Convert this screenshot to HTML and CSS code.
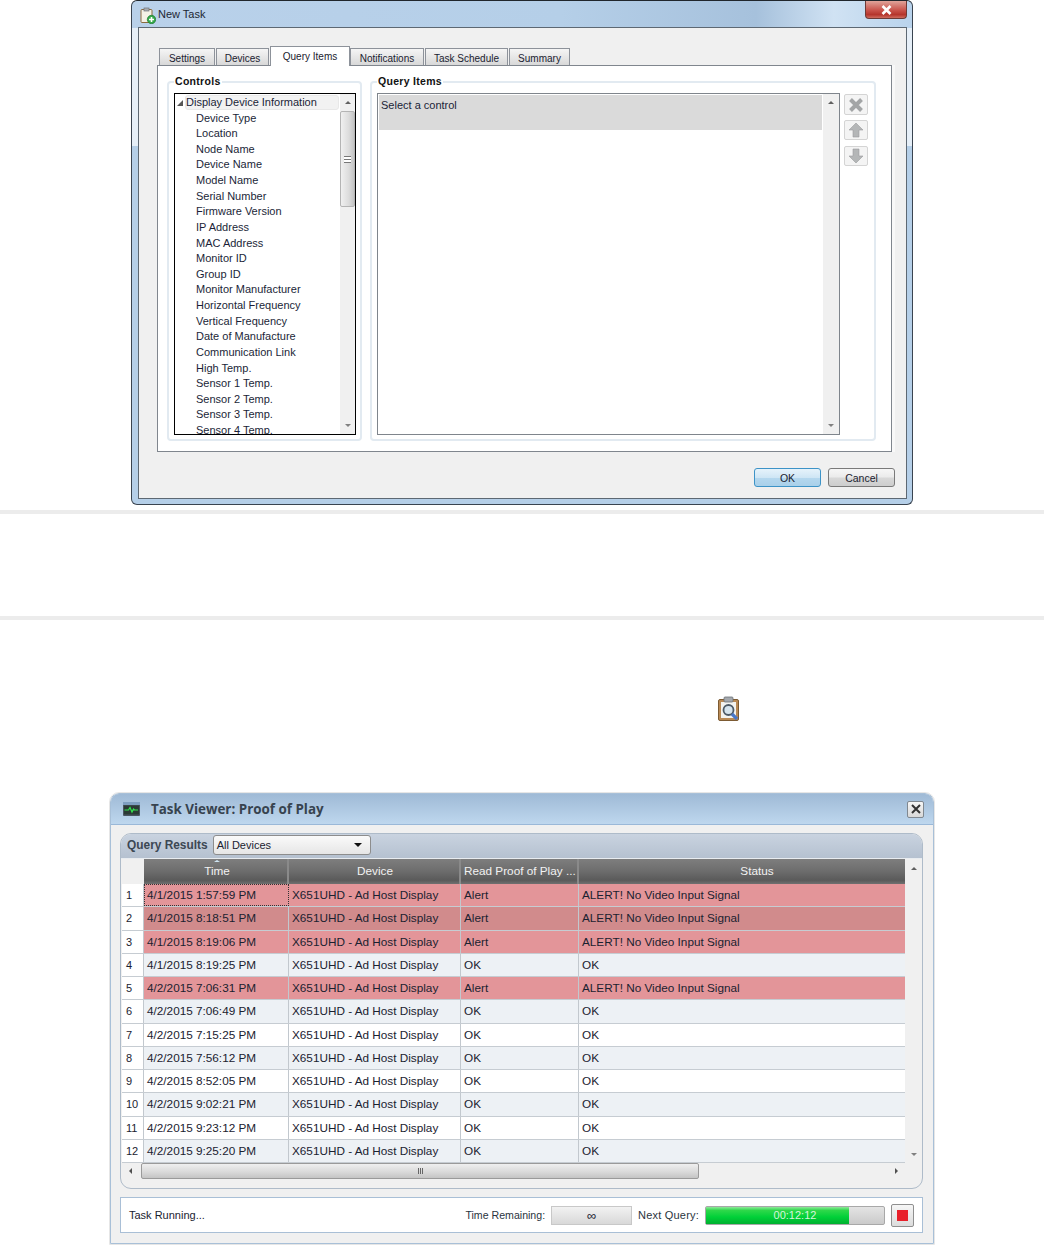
FILE: index.html
```html
<!DOCTYPE html>
<html lang="en">

<head>
    <meta charset="UTF-8">
    <title>New Task and Task Viewer</title>
    <link rel="stylesheet" href="styles.css">
</head>

<body>
    <div class="new-task">
        <div class="title-bar">
            <svg class="title-icon" width="16" height="17" viewBox="0 0 16 17">
                <rect x="1" y="2.5" width="11" height="13" rx="1" fill="#f4f1e6" stroke="#8b6b3e"/>
                <rect x="4" y="1" width="5" height="3" fill="#a9adb2" stroke="#6f7378" stroke-width=".7"/>
                <circle cx="11.5" cy="12.5" r="4.2" fill="#35a84a" stroke="#1d7a30" stroke-width=".7"/>
                <path d="M9 12.5h5M11.5 10v5" stroke="#fff" stroke-width="1.6"/>
            </svg>
            <span class="title-text">New Task</span>
            <div class="close-red">
                <svg width="11" height="10" viewBox="0 0 11 10"><path d="M1.5 1l8 8M9.5 1l-8 8" stroke="#fff" stroke-width="2.6"/></svg>
            </div>
        </div>
        <div class="inner">
            <div class="tabs">
                <div class="tab tab-settings">Settings</div>
                <div class="tab tab-devices">Devices</div>
                <div class="tab tab-active">Query Items</div>
                <div class="tab tab-notify">Notifications</div>
                <div class="tab tab-schedule">Task Schedule</div>
                <div class="tab tab-summary">Summary</div>
            </div>
            <div class="panel">
                <div class="group group-controls">
                    <div class="group-title"><span>Controls</span></div>
                    <div class="listbox listbox-black">
                        <div class="tree">
                            <div class="tree-head"><span class="tree-arrow"></span><span class="tree-label">Display Device Information</span></div>
                            <div class="tree-item">Device Type</div>
                            <div class="tree-item">Location</div>
                            <div class="tree-item">Node Name</div>
                            <div class="tree-item">Device Name</div>
                            <div class="tree-item">Model Name</div>
                            <div class="tree-item">Serial Number</div>
                            <div class="tree-item">Firmware Version</div>
                            <div class="tree-item">IP Address</div>
                            <div class="tree-item">MAC Address</div>
                            <div class="tree-item">Monitor ID</div>
                            <div class="tree-item">Group ID</div>
                            <div class="tree-item">Monitor Manufacturer</div>
                            <div class="tree-item">Horizontal Frequency</div>
                            <div class="tree-item">Vertical Frequency</div>
                            <div class="tree-item">Date of Manufacture</div>
                            <div class="tree-item">Communication Link</div>
                            <div class="tree-item">High Temp.</div>
                            <div class="tree-item">Sensor 1 Temp.</div>
                            <div class="tree-item">Sensor 2 Temp.</div>
                            <div class="tree-item">Sensor 3 Temp.</div>
                            <div class="tree-item">Sensor 4 Temp.</div>
                        </div>
                        <div class="vscroll">
                            <div class="arrow-box"><span class="arr-up"></span></div>
                            <div class="thumb"><span class="grip"></span></div>
                            <div class="track"></div>
                            <div class="arrow-box"><span class="arr-down"></span></div>
                        </div>
                    </div>
                </div>
                <div class="group group-query">
                    <div class="group-title"><span>Query Items</span></div>
                    <div class="query-body">
                        <div class="listbox listbox-grey">
                            <div class="query-list">
                                <div class="query-selected">Select a control</div>
                            </div>
                            <div class="vscroll">
                                <div class="arrow-box"><span class="arr-up"></span></div>
                                <div class="track"></div>
                                <div class="arrow-box"><span class="arr-down"></span></div>
                            </div>
                        </div>
                        <div class="tools">
                            <div class="tool tool-tall">
                                <svg width="16" height="16" viewBox="0 0 16 16"><path d="M2.5 2.5l11 11M13.5 2.5l-11 11" stroke="#a3a5a6" stroke-width="4"/></svg>
                            </div>
                            <div class="tool">
                                <svg width="16" height="16" viewBox="0 0 16 16"><path d="M8 1l7 7h-4v7H5V8H1z" fill="#b4b6b7" stroke="#9a9c9d" stroke-width=".6"/></svg>
                            </div>
                            <div class="tool">
                                <svg width="16" height="16" viewBox="0 0 16 16"><path d="M8 15l7-7h-4V1H5v7H1z" fill="#b4b6b7" stroke="#9a9c9d" stroke-width=".6"/></svg>
                            </div>
                        </div>
                    </div>
                </div>
            </div>
            <div class="dialog-buttons">
                <div class="btn btn-default">OK</div>
                <div class="btn">Cancel</div>
            </div>
        </div>
    </div>

    <div class="sep sep-one"></div>
    <div class="sep sep-two"></div>

    <div class="icon-row">
        <svg width="25" height="26" viewBox="0 0 25 26">
            <rect x="1.5" y="3.5" width="20" height="21" rx="1.5" fill="#b98a55" stroke="#7c5a32"/>
            <rect x="4" y="6" width="15" height="16" fill="#f3f3f0"/>
            <rect x="7" y="1" width="9" height="5" rx="1" fill="#a4a8ad" stroke="#6d7176" stroke-width=".8"/>
            <circle cx="11.5" cy="14" r="5" fill="#d5e4ee" stroke="#4d5a66" stroke-width="1.8"/>
            <path d="M15 18l5 5" stroke="#4a78c8" stroke-width="3.2"/>
        </svg>
    </div>

    <div class="viewer">
        <div class="viewer-title">
            <svg width="17" height="14" viewBox="0 0 17 14">
                <rect width="17" height="14" rx="1" fill="#4a5560"/>
                <rect y="0" width="17" height="3" fill="#7f9fc0"/>
                <rect x="1" y="3.5" width="15" height="9" fill="#2b3a34"/>
                <path d="M1.5 8h4l1.5-2.5 2 4.5 1.5-3 1 1h3.5" fill="none" stroke="#35e04f" stroke-width="1.2"/>
            </svg>
            <span class="viewer-name">Task Viewer: Proof of Play</span>
            <div class="close-small">
                <svg width="10" height="10" viewBox="0 0 10 10"><path d="M1 1l8 8M9 1l-8 8" stroke="#333" stroke-width="2"/></svg>
            </div>
        </div>
        <div class="viewer-body">
            <div class="results">
                <div class="results-head">
                    <span class="results-label">Query Results</span>
                    <div class="combo"><span>All Devices</span><span class="combo-arrow"></span></div>
                </div>
                <div class="grid-area">
                    <div class="grid">
                        <div class="row row-header">
                            <div class="c c-num"></div>
                            <div class="c c-time"><span class="sort-mark"></span>Time</div>
                            <div class="c c-device">Device</div>
                            <div class="c c-read">Read Proof of Play ...</div>
                            <div class="c c-status">Status</div>
                        </div>
                        <div class="row alert">
                            <div class="c c-num">1</div><div class="c c-time focus">4/1/2015 1:57:59 PM</div><div class="c c-device">X651UHD - Ad Host Display</div><div class="c c-read">Alert</div><div class="c c-status">ALERT! No Video Input Signal</div>
                        </div>
                        <div class="row alert-dark">
                            <div class="c c-num">2</div><div class="c c-time">4/1/2015 8:18:51 PM</div><div class="c c-device">X651UHD - Ad Host Display</div><div class="c c-read">Alert</div><div class="c c-status">ALERT! No Video Input Signal</div>
                        </div>
                        <div class="row alert">
                            <div class="c c-num">3</div><div class="c c-time">4/1/2015 8:19:06 PM</div><div class="c c-device">X651UHD - Ad Host Display</div><div class="c c-read">Alert</div><div class="c c-status">ALERT! No Video Input Signal</div>
                        </div>
                        <div class="row shade">
                            <div class="c c-num">4</div><div class="c c-time">4/1/2015 8:19:25 PM</div><div class="c c-device">X651UHD - Ad Host Display</div><div class="c c-read">OK</div><div class="c c-status">OK</div>
                        </div>
                        <div class="row alert">
                            <div class="c c-num">5</div><div class="c c-time">4/2/2015 7:06:31 PM</div><div class="c c-device">X651UHD - Ad Host Display</div><div class="c c-read">Alert</div><div class="c c-status">ALERT! No Video Input Signal</div>
                        </div>
                        <div class="row shade">
                            <div class="c c-num">6</div><div class="c c-time">4/2/2015 7:06:49 PM</div><div class="c c-device">X651UHD - Ad Host Display</div><div class="c c-read">OK</div><div class="c c-status">OK</div>
                        </div>
                        <div class="row">
                            <div class="c c-num">7</div><div class="c c-time">4/2/2015 7:15:25 PM</div><div class="c c-device">X651UHD - Ad Host Display</div><div class="c c-read">OK</div><div class="c c-status">OK</div>
                        </div>
                        <div class="row shade">
                            <div class="c c-num">8</div><div class="c c-time">4/2/2015 7:56:12 PM</div><div class="c c-device">X651UHD - Ad Host Display</div><div class="c c-read">OK</div><div class="c c-status">OK</div>
                        </div>
                        <div class="row">
                            <div class="c c-num">9</div><div class="c c-time">4/2/2015 8:52:05 PM</div><div class="c c-device">X651UHD - Ad Host Display</div><div class="c c-read">OK</div><div class="c c-status">OK</div>
                        </div>
                        <div class="row shade">
                            <div class="c c-num">10</div><div class="c c-time">4/2/2015 9:02:21 PM</div><div class="c c-device">X651UHD - Ad Host Display</div><div class="c c-read">OK</div><div class="c c-status">OK</div>
                        </div>
                        <div class="row">
                            <div class="c c-num">11</div><div class="c c-time">4/2/2015 9:23:12 PM</div><div class="c c-device">X651UHD - Ad Host Display</div><div class="c c-read">OK</div><div class="c c-status">OK</div>
                        </div>
                        <div class="row shade">
                            <div class="c c-num">12</div><div class="c c-time">4/2/2015 9:25:20 PM</div><div class="c c-device">X651UHD - Ad Host Display</div><div class="c c-read">OK</div><div class="c c-status">OK</div>
                        </div>
                    </div>
                    <div class="vscroll grid-scroll">
                        <div class="arrow-box arrow-tall"><span class="arr-up"></span></div>
                        <div class="track"></div>
                        <div class="arrow-box arrow-tall"><span class="arr-down"></span></div>
                    </div>
                </div>
                <div class="hscroll">
                    <div class="arrow-side"><span class="arr-left"></span></div>
                    <div class="hthumb"><span class="hgrip"></span></div>
                    <div class="htrack"></div>
                    <div class="arrow-side"><span class="arr-right"></span></div>
                </div>
            </div>
            <div class="status-bar">
                <span class="status-text">Task Running...</span>
                <span class="status-label time-label">Time Remaining:</span>
                <div class="remaining">&infin;</div>
                <span class="status-label next-label">Next Query:</span>
                <div class="progress">
                    <div class="progress-fill"></div>
                    <span class="progress-text">00:12:12</span>
                </div>
                <div class="stop"><span class="stop-square"></span></div>
            </div>
        </div>
    </div>
</body>

</html>
```

FILE: styles.css
```css
html, body {
    margin: 0;
    height: 1245px;
    overflow: hidden;
    background: #fff;
}
body {
    font-family: "Liberation Sans", Arial, sans-serif;
    font-size: 11px;
    color: #1a2230;
}

/* new task dialog */
.new-task {
    box-sizing: border-box;
    width: 782px;
    height: 505px;
    margin-left: 131px;
    padding: 0 5px 6px 6px;
    border: 1px solid #3a4450;
    border-top-color: #20262c;
    border-radius: 6px;
    background:
        linear-gradient(90deg, #b9d1ea 0%, #b5cfe8 55%, #a6c1dc 80%, #d0e2f3 90%, #b9d3ec 100%) top / 100% 27px no-repeat,
        linear-gradient(#e6eff8 145px, #b5cfe8 145px);
}
.title-bar {
    display: flex;
    align-items: flex-start;
    height: 26px;
}
.title-icon {
    margin: 6px 0 0 2px;
}
.title-text {
    margin: 7px 0 0 2px;
    font-size: 11px;
    color: #1c2733;
}
.close-red {
    display: flex;
    justify-content: center;
    align-items: center;
    width: 42px;
    height: 18px;
    margin-left: auto;
    border: 1px solid #6d3a36;
    border-top: 0;
    box-sizing: border-box;
    border-radius: 0 0 4px 4px;
    background: linear-gradient(#e0a49a, #c9524a 55%, #b5352c 80%, #cf6b5e);
}
.inner {
    box-sizing: border-box;
    height: 472px;
    padding: 18px 14px 0 18px;
    border: 1px solid #5d6873;
    background: #f0f0f0;
}
.tabs {
    display: flex;
    align-items: flex-end;
    height: 19px;
    padding-left: 2px;
}
.tab {
    box-sizing: border-box;
    height: 17px;
    margin-right: 1px;
    border: 1px solid #8d929a;
    border-bottom: 0;
    background: linear-gradient(#f5f5f5, #e4e4e4 60%, #d8d8d8);
    text-align: center;
    line-height: 19px;
    font-size: 10px;
}
.tab-settings { width: 56px; }
.tab-devices { width: 53px; }
.tab-active {
    position: relative;
    z-index: 1;
    width: 80px;
    height: 20px;
    margin-bottom: -1px;
    margin-right: 0;
    background: #fff;
    line-height: 20px;
}
.tab-notify { width: 74px; }
.tab-schedule { width: 83px; }
.tab-summary { width: 61px; margin-right: 0; }

.panel {
    box-sizing: border-box;
    display: flex;
    gap: 8px;
    width: 735px;
    height: 387px;
    padding: 15px 0 0 9px;
    border: 1px solid #80868e;
    background: #fff;
    box-shadow: 3px 0 0 #f8f8f8;
}
.group {
    box-sizing: border-box;
    height: 360px;
    padding: 0 5px;
    border: 2px solid #e2eaf1;
    border-radius: 4px;
}
.group-controls { width: 195px; }
.group-query { width: 506px; }
.group-title {
    height: 11px;
    margin-top: -7px;
    line-height: 11px;
    font-weight: bold;
    font-size: 10.5px;
    letter-spacing: .3px;
    color: #111;
}
.group-title span {
    padding: 0 1px;
    background: #fff;
}
.listbox {
    box-sizing: border-box;
    display: flex;
    height: 342px;
    margin-top: 6px;
    overflow: hidden;
    background: #fff;
}
.listbox-black {
    width: 182px;
    border: 1px solid #000;
}
.listbox-grey {
    width: 463px;
    border: 1px solid #7f858c;
}
.tree {
    flex: 1;
    overflow: hidden;
    font-size: 11px;
    color: #1b1f38;
}
.tree-head {
    display: flex;
    align-items: center;
    height: 15.5px;
    margin-top: 1px;
}
.tree-arrow {
    width: 0;
    height: 0;
    margin: 0 3px 0 2px;
    border-left: 6px solid transparent;
    border-bottom: 6px solid #555;
}
.tree-label {
    box-sizing: border-box;
    width: 154px;
    height: 15px;
    margin-left: -1px;
    border: 1px solid #e8e8e8;
    border-radius: 3px;
    background: #f2f2f2;
    line-height: 13px;
}
.tree-item {
    height: 15.63px;
    padding-left: 21px;
    line-height: 15.63px;
    white-space: nowrap;
}
.vscroll {
    display: flex;
    flex-direction: column;
    width: 15px;
    background: #f0f0f0;
    flex-shrink: 0;
}
.arrow-box {
    display: flex;
    justify-content: center;
    align-items: center;
    height: 17px;
    flex-shrink: 0;
}
.arr-up, .arr-down, .arr-left, .arr-right {
    width: 0;
    height: 0;
}
.arr-up {
    border-left: 3px solid transparent;
    border-right: 3px solid transparent;
    border-bottom: 3px solid #606060;
}
.arr-down {
    border-left: 3px solid transparent;
    border-right: 3px solid transparent;
    border-top: 3px solid #808080;
}
.arr-left {
    border-top: 3px solid transparent;
    border-bottom: 3px solid transparent;
    border-right: 3px solid #505050;
}
.arr-right {
    border-top: 3px solid transparent;
    border-bottom: 3px solid transparent;
    border-left: 3px solid #505050;
}
.thumb {
    box-sizing: border-box;
    display: flex;
    justify-content: center;
    align-items: center;
    height: 96px;
    border: 1px solid #b4b4b4;
    border-radius: 2px;
    background: linear-gradient(90deg, #f0f0f0, #dcdcdc 60%, #c4c4c4);
    flex-shrink: 0;
}
.grip {
    width: 7px;
    height: 5px;
    border-top: 1px solid #777;
    border-bottom: 1px solid #777;
    background: linear-gradient(#fff 40%, #777 40%, #777 60%, #fff 60%);
}
.track {
    flex: 1;
}
.query-body {
    display: flex;
    gap: 4px;
}
.query-list {
    flex: 1;
    padding: 1px 1px 0;
}
.query-selected {
    height: 35px;
    padding: 4px 0 0 2px;
    box-sizing: border-box;
    background: #dadada;
    font-size: 11px;
    color: #1b1f38;
}
.listbox-grey .vscroll {
    width: 16px;
}
.tools {
    display: flex;
    flex-direction: column;
    gap: 5px;
    margin-top: 7px;
}
.tool {
    box-sizing: border-box;
    display: flex;
    justify-content: center;
    align-items: center;
    width: 24px;
    height: 21px;
    border: 1px solid #d4d4d4;
    border-radius: 2px;
    background: #f4f4f4;
}
.tool + .tool {
    height: 20px;
}
.tool:last-child {
    margin-top: 1px;
}
.dialog-buttons {
    display: flex;
    justify-content: flex-end;
    gap: 7px;
    padding: 16px 11px 0 0;
    margin-right: -14px;
}
.btn {
    box-sizing: border-box;
    width: 67px;
    height: 19px;
    border: 1px solid #7a7a7a;
    border-radius: 3px;
    background: linear-gradient(#f6f6f6, #ebebeb 48%, #d8d8d8 52%, #cdcdcd);
    text-align: center;
    line-height: 18px;
    font-size: 10.5px;
}
.btn-default {
    border-color: #3d93c7;
    background: linear-gradient(#e6f3fb, #cfe6f5 50%, #b4d7ee 55%, #a9d0ea);
}

/* separators */
.sep {
    height: 4px;
    background: #ececec;
}
.sep-one { margin-top: 5px; }
.sep-two { margin-top: 102px; }

.icon-row {
    height: 26px;
    margin-top: 76px;
    padding-left: 717px;
}

/* task viewer */
.viewer {
    box-sizing: border-box;
    width: 824px;
    height: 451px;
    margin: 71px 0 0 110px;
    border: 1px solid #a8c0d8;
    outline: 1px solid #e6e6e6;
    border-radius: 9px 9px 0 0;
    background: #f0f0f0;
}
.viewer-title {
    display: flex;
    align-items: center;
    height: 30px;
    padding: 0 9px 0 12px;
    border-bottom: 1px solid #9ab8d8;
    border-radius: 8px 8px 0 0;
    background: linear-gradient(#9fbad6, #bed7ee);
}
.viewer-name {
    margin-left: 11px;
    font-family: "Open Sans", sans-serif;
    font-size: 13.4px;
    font-weight: bold;
    color: #37434f;
}
.close-small {
    box-sizing: border-box;
    display: flex;
    justify-content: center;
    align-items: center;
    width: 17px;
    height: 17px;
    margin-left: auto;
    border: 1px solid #808890;
    border-radius: 2px;
    background: linear-gradient(#f6f6f6, #d8d8d8);
}
.viewer-body {
    padding: 8px 10px 0 9px;
}
.results {
    box-sizing: border-box;
    height: 356px;
    border: 1px solid #aebbc9;
    border-radius: 11px;
    background: #f0f0f0;
    overflow: hidden;
}
.results-head {
    display: flex;
    align-items: flex-start;
    height: 24px;
    padding-left: 6px;
    background: linear-gradient(#c9d3e0, #b5c1d0);
    border-bottom: 1px solid #e8ecf0;
}
.results-label {
    margin-top: 4px;
    font-size: 11.9px;
    font-weight: bold;
    color: #3c4753;
}
.combo {
    box-sizing: border-box;
    display: flex;
    justify-content: space-between;
    align-items: center;
    width: 158px;
    height: 20px;
    margin: 1px 0 0 5px;
    padding: 0 8px 0 3px;
    border: 1px solid #8d8d8d;
    border-radius: 3px;
    background: linear-gradient(#fafafa, #e6e6e6);
    font-size: 11px;
}
.combo-arrow {
    width: 0;
    height: 0;
    border-left: 4px solid transparent;
    border-right: 4px solid transparent;
    border-top: 4px solid #111;
}
.grid-area {
    display: flex;
    padding-left: 1px;
    width: 800px;
}
.grid {
    width: 783px;
    height: 304px;
    overflow: hidden;
}
.grid-scroll {
    width: 16px;
}
.arrow-tall {
    height: 18px;
    padding-left: 2px;
}
.arrow-tall:last-child {
    padding-top: 2px;
}
.row {
    box-sizing: border-box;
    display: flex;
    height: 23.25px;
    border-bottom: 1px solid #c6ccd2;
    background: #fff;
    line-height: 22px;
    font-size: 11.75px;
    white-space: nowrap;
}
.row-header {
    height: 25px;
    border-bottom: 0;
    background: none;
    color: #f2f2f2;
    line-height: 23px;
    text-align: center;
}
.row-header .c {
    padding: 0;
    border-right: 2px solid #8a8a8a;
    background: linear-gradient(#7e7e7e, #6c6c6c 50%, #5a5a5a 85%, #707070);
}
.row-header .c-time {
    padding-left: 3px;
}
.row-header .c-device {
    padding-left: 2px;
}
.row-header .c-read {
    padding-left: 3px;
    text-align: left;
}
.row-header .c-status {
    padding-left: 30px;
    border-right: 0;
}
.row-header .c-num {
    border-right: 0;
    background: #f0f0f0;
}
.c {
    box-sizing: border-box;
    flex-shrink: 0;
    padding-left: 3px;
    border-right: 1px solid #c2c8ce;
    overflow: hidden;
}
.c-num { width: 22px; padding-left: 4px; background: #fff; font-size: 11px; }
.c-time { width: 145px; position: relative; }
.c-device { width: 172px; }
.c-read { width: 118px; }
.c-status { width: 326px; border-right: 0; }
.shade .c-time, .shade .c-device, .shade .c-read, .shade .c-status { background: #edf1f5; }
.alert .c-time, .alert .c-device, .alert .c-read, .alert .c-status { background: #e39599; }
.alert-dark .c-time, .alert-dark .c-device, .alert-dark .c-read, .alert-dark .c-status { background: #d18b8c; }
.focus {
    padding-left: 2px;
    border: 1px dotted #333;
    line-height: 20px;
}
.sort-mark {
    position: absolute;
    top: 1px;
    left: 70px;
    width: 0;
    height: 0;
    border-left: 3px solid transparent;
    border-right: 3px solid transparent;
    border-bottom: 2px solid #cfe6f5;
}
.hscroll {
    display: flex;
    align-items: stretch;
    width: 783px;
    height: 16px;
    margin-left: 1px;
    background: #f0f0f0;
}
.arrow-side {
    display: flex;
    justify-content: center;
    align-items: center;
    width: 18px;
    flex-shrink: 0;
}
.arrow-side:first-child {
    width: 19px;
    padding-right: 3px;
    box-sizing: border-box;
}
.hthumb {
    box-sizing: border-box;
    display: flex;
    justify-content: center;
    align-items: center;
    width: 558px;
    border: 1px solid #9a9a9a;
    border-radius: 2px;
    background: linear-gradient(#efefef, #d8d8d8 60%, #c4c4c4);
}
.hgrip {
    width: 5px;
    height: 6px;
    background: repeating-linear-gradient(90deg, #666 0, #666 1px, transparent 1px, transparent 2px);
}
.htrack {
    flex: 1;
}
.status-bar {
    box-sizing: border-box;
    display: flex;
    align-items: center;
    height: 36px;
    margin-top: 8px;
    padding: 0 8px 0 8px;
    border: 1px solid #a9bfd6;
    background: #fff;
}
.status-text {
    margin-right: auto;
}
.status-label {
    color: #2a3440;
}
.time-label {
    font-size: 10.6px;
}
.next-label {
    letter-spacing: .2px;
}
.remaining {
    box-sizing: border-box;
    width: 81px;
    height: 19px;
    margin: 0 6px;
    border: 1px solid #c8c8c8;
    background: linear-gradient(#f2f2f2, #d8d8d8);
    text-align: center;
    line-height: 17px;
    font-size: 13px;
}
.progress {
    box-sizing: border-box;
    position: relative;
    display: flex;
    width: 180px;
    height: 19px;
    margin: 0 6px;
    border: 1px solid #a8a8a8;
    border-radius: 2px;
    background: linear-gradient(#e4e4e4, #cacaca);
}
.progress-fill {
    width: 143px;
    background: linear-gradient(#8ee89a, #2ed84a 20%, #00d038 60%, #00b030);
}
.progress-text {
    position: absolute;
    left: 0;
    right: 0;
    text-align: center;
    line-height: 17px;
    color: #d8f5dc;
}
.stop {
    box-sizing: border-box;
    display: flex;
    justify-content: center;
    align-items: center;
    width: 23px;
    height: 23px;
    border: 1px solid #8f8f8f;
    border-radius: 2px;
    background: linear-gradient(#f6f6f6, #dcdcdc);
}
.stop-square {
    width: 11px;
    height: 11px;
    background: #e8202a;
}
```
